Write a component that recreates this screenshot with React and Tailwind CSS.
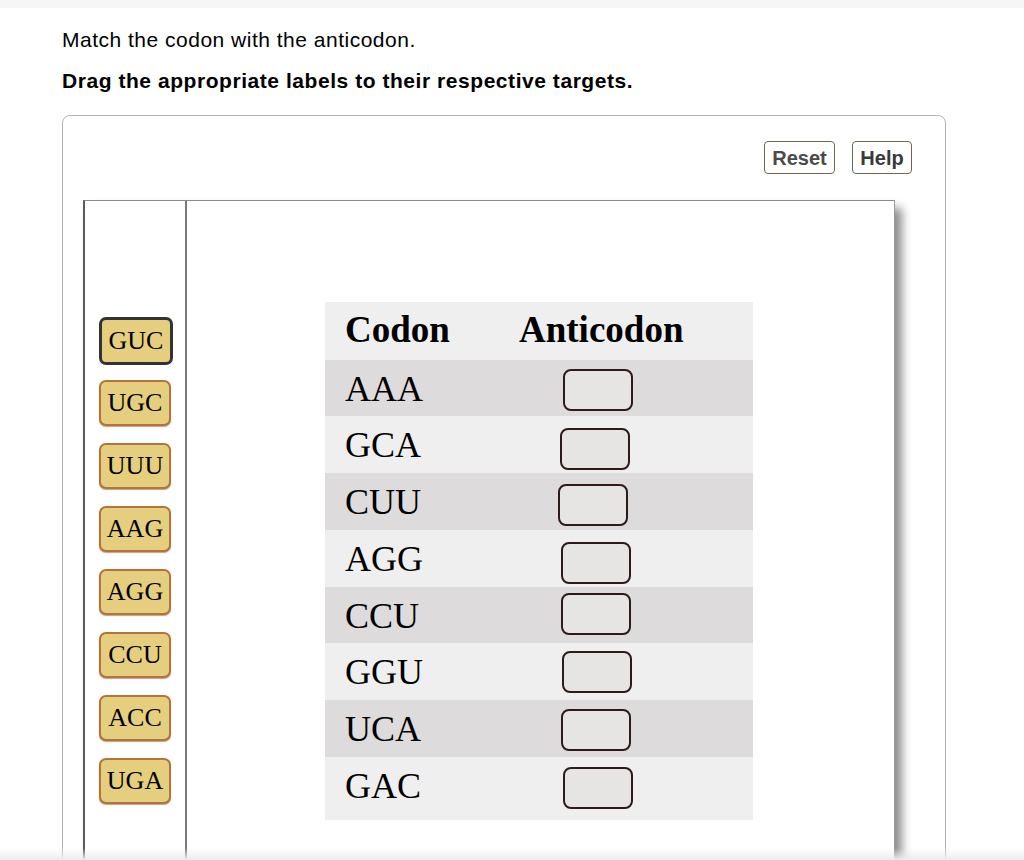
const labels = ["UGC", "UUU", "AAG", "AGG", "CCU", "ACC", "UGA"];

const rows = [
  { codon: "AAA", bg: "bg-[#dddbdb]", h: "h-[56px]", box: "ml-[44px] mt-[9px]" },
  { codon: "GCA", bg: "bg-[#efefef]", h: "h-[57px]", box: "ml-[41px] mt-[12px]" },
  { codon: "CUU", bg: "bg-[#dddbdb]", h: "h-[57px]", box: "ml-[39px] mt-[11px]" },
  { codon: "AGG", bg: "bg-[#efefef]", h: "h-[57px]", box: "ml-[42px] mt-[12px]" },
  { codon: "CCU", bg: "bg-[#dddbdb]", h: "h-[56px]", box: "ml-[42px] mt-[6px]" },
  { codon: "GGU", bg: "bg-[#efefef]", h: "h-[57px]", box: "ml-[43px] mt-[8px]" },
  { codon: "UCA", bg: "bg-[#dddbdb]", h: "h-[57px]", box: "ml-[42px] mt-[9px]" },
  { codon: "GAC", bg: "bg-[#efefef]", h: "h-[63px]", box: "ml-[44px] mt-[10px]" },
];

function Label({ text }) {
  return (
    <div className="flex h-[46px] w-[72px] items-center justify-center rounded-[7px] border-2 border-[#b3733a] bg-[#e5cf7f] text-[26px] leading-none text-black shadow-[0_1px_1px_rgba(120,70,20,0.5)] font-['Liberation_Serif',serif]">
      {text}
    </div>
  );
}

export default function App() {
  return (
    <div className="relative h-[860px] overflow-hidden bg-white text-black font-['Liberation_Sans',Arial,sans-serif]">
      <div className="h-2 bg-[#f6f6f6]" />
      <div className="px-[62px] pt-[20px]">
        <p className="text-[21px] leading-[24px] tracking-[0.5px]">Match the codon with the anticodon.</p>
        <p className="mt-[17px] text-[21px] leading-[24px] font-bold tracking-[0.55px]">
          Drag the appropriate labels to their respective targets.
        </p>

        <div className="mt-[22px] h-[800px] w-[884px] rounded-lg border border-[#b3b3b3] pl-[20px] pt-[25px]">
          <div className="flex justify-end gap-[17px] pr-[33px]">
            <button className="h-[33px] w-[71px] rounded-[4px] border border-[#6e6852] bg-white text-[20px] font-bold text-[#4a4a4a]">
              Reset
            </button>
            <button className="h-[33px] w-[60px] rounded-[4px] border border-[#6e6852] bg-white text-[20px] font-bold text-[#3a3a3a]">
              Help
            </button>
          </div>

          <div className="mt-[26px] flex h-[700px] w-[812px] border-t border-r border-l-2 border-t-[#8a8a8a] border-r-[#999] border-l-[#5a5a5a] shadow-[7px_8px_9px_rgba(0,0,0,0.45)]">
            <div className="w-[102px] border-r-2 border-[#7a7a7a] pl-[14px] pt-[116px]">
              <div className="flex h-[48px] w-[74px] items-center justify-center rounded-[7px] border-[3px] border-[#333] bg-[#e5cf7f] text-[26px] leading-none text-black font-['Liberation_Serif',serif]">
                GUC
              </div>
              <div className="mt-[15px] flex flex-col gap-[17px]">
                {labels.map((l) => (
                  <Label key={l} text={l} />
                ))}
              </div>
            </div>

            <div className="flex-1 pl-[138px] pt-[101px]">
              <div className="w-[428px] font-['Liberation_Serif',serif]">
                <div className="flex h-[58px] bg-[#efefef] text-[37px] font-bold">
                  <div className="w-[194px] pl-[20px] pt-[8px] leading-[40px]">Codon</div>
                  <div className="pt-[8px] leading-[40px]">Anticodon</div>
                </div>
                {rows.map((r) => (
                  <div key={r.codon} className={`flex ${r.h} ${r.bg}`}>
                    <div className="w-[194px] pl-[20px] pt-[9px] text-[36px] leading-[40px]">{r.codon}</div>
                    <div className={`h-[42px] w-[70px] rounded-[8px] border-2 border-[#2d1a1a] bg-[#e7e5e4] ${r.box}`} />
                  </div>
                ))}
              </div>
            </div>
          </div>
        </div>
      </div>
      <div className="absolute inset-x-0 bottom-0 h-[12px] bg-gradient-to-b from-transparent to-[#ececec]" />
    </div>
  );
}
